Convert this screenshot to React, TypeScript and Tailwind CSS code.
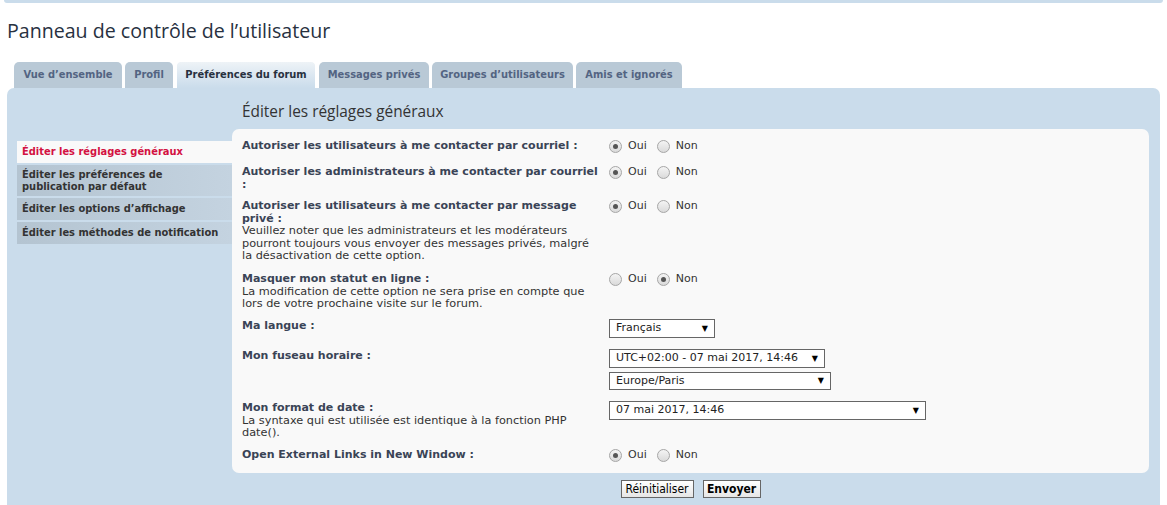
import React from "react";

const tabs = [
  { label: "Vue d’ensemble", w: "w-[108px]" },
  { label: "Profil", w: "w-[48px]" },
  { label: "Préférences du forum", w: "w-[140px]", active: true },
  { label: "Messages privés", w: "w-[110px]" },
  { label: "Groupes d’utilisateurs", w: "w-[141px]" },
  { label: "Amis et ignorés", w: "w-[106px]" },
];

function Radio({ checked }: { checked?: boolean }) {
  return (
    <span className="w-[13px] h-[13px] rounded-full border border-[#a6a6a6] bg-gradient-to-b from-[#f4f4f4] to-[#dadada] flex items-center justify-center shrink-0">
      {checked && <span className="w-[5px] h-[5px] rounded-full bg-[#555]" />}
    </span>
  );
}

function YesNo({ yes }: { yes: boolean }) {
  return (
    <div className="flex items-center h-[13px] text-[11px] text-[#333]">
      <Radio checked={yes} />
      <span className="ml-[6px]">Oui</span>
      <span className="ml-[10px]">
        <Radio checked={!yes} />
      </span>
      <span className="ml-[6px]">Non</span>
    </div>
  );
}

function Select({ value, w, h = "h-[19px]" }: { value: string; w: string; h?: string }) {
  return (
    <div className={`${w} ${h} border border-[#666] bg-white flex items-center justify-between pl-[6px] pr-[6px] text-[11px] text-[#222]`}>
      <span>{value}</span>
      <span className="text-[8px] leading-none text-black">▼</span>
    </div>
  );
}

function Row({ h, label, note, children }: { h: string; label: string; note?: string; children: React.ReactNode }) {
  return (
    <div className={`flex ${h}`}>
      <div className="w-[360px] shrink-0 text-[11px] leading-[12.5px]">
        <div className="font-bold text-[#3a4456]">{label}</div>
        {note && <div className="text-[11.3px] text-[#333]">{note}</div>}
      </div>
      <div className="ml-[7px]">{children}</div>
    </div>
  );
}

export default function App() {
  return (
    <div className="w-[1167px] h-[505px] overflow-hidden bg-white font-['DejaVu_Sans_Condensed',sans-serif]">
      <div className="mx-[4px] h-[3px] bg-[#cadceb] rounded-b-[3px]" />

      <h2 className="mt-[16px] ml-[7px] h-[24px] leading-[24px] text-[19.6px] text-[#28313f] font-['Open_Sans',sans-serif]">
        Panneau de contrôle de l’utilisateur
      </h2>

      <div className="mt-[18px] ml-[14px] flex items-end gap-[3px] h-[27px]">
        {tabs.map((t) =>
          t.active ? (
            <div
              key={t.label}
              className={`${t.w} h-[27px] rounded-t-[5px] border border-b-0 border-white bg-gradient-to-b from-[#eef3f7] to-[#cadceb] flex items-center justify-center pt-[1px] text-[11px] font-bold text-[#28313f]`}
            >
              {t.label}
            </div>
          ) : (
            <div
              key={t.label}
              className={`${t.w} h-[26px] rounded-t-[5px] bg-[#b9c9d6] flex items-center justify-center pt-[1px] text-[11px] font-bold text-[#536482]`}
            >
              {t.label}
            </div>
          )
        )}
      </div>

      <div className="mx-[7px] h-[417px] bg-[#cadceb] rounded-t-[7px] flex pl-[10px] pr-[11px]">
        <div className="w-[215px] shrink-0 pt-[53px] flex flex-col gap-[2px] text-[11px] font-bold">
          <div className="h-[22px] bg-[#f9f9f9] pl-[5px] pt-[1px] flex items-center text-[#d31141]">Éditer les réglages généraux</div>
          <div className="h-[31px] bg-gradient-to-r from-[#b4c4d1] to-[#c4d3e0] pl-[5px] pt-[1px] flex items-center leading-[12px] text-[#333]">
            Éditer les préférences de
            <br />
            publication par défaut
          </div>
          <div className="h-[22px] bg-gradient-to-r from-[#b4c4d1] to-[#c4d3e0] pl-[5px] pt-[1px] flex items-center text-[#333]">Éditer les options d’affichage</div>
          <div className="h-[22px] bg-gradient-to-r from-[#b4c4d1] to-[#c4d3e0] pl-[5px] pt-[1px] flex items-center text-[#333]">Éditer les méthodes de notification</div>
        </div>

        <div className="flex-1 pt-[14px]">
          <h3 className="ml-[10px] h-[20px] leading-[20px] text-[15.4px] text-[#333] font-['Open_Sans',sans-serif]">
            Éditer les réglages généraux
          </h3>
          <div className="mt-[7px] h-[344px] bg-[#f9f9f9] rounded-[7px] pt-[11px] pl-[10px] font-['DejaVu_Sans',sans-serif]">
            <Row h="h-[26px]" label="Autoriser les utilisateurs à me contacter par courriel :">
              <YesNo yes />
            </Row>
            <Row h="h-[34px]" label="Autoriser les administrateurs à me contacter par courriel :">
              <YesNo yes />
            </Row>
            <Row
              h="h-[73px]"
              label="Autoriser les utilisateurs à me contacter par message privé :"
              note="Veuillez noter que les administrateurs et les modérateurs pourront toujours vous envoyer des messages privés, malgré la désactivation de cette option."
            >
              <YesNo yes />
            </Row>
            <Row
              h="h-[47px]"
              label="Masquer mon statut en ligne :"
              note="La modification de cette option ne sera prise en compte que lors de votre prochaine visite sur le forum."
            >
              <YesNo yes={false} />
            </Row>
            <Row h="h-[30px]" label="Ma langue :">
              <div className="-mt-[1px]">
                <Select value="Français" w="w-[106px]" />
              </div>
            </Row>
            <Row h="h-[52px]" label="Mon fuseau horaire :">
              <div className="-mt-[1px] flex flex-col gap-[4px]">
                <Select value="UTC+02:00 - 07 mai 2017, 14:46" w="w-[216px]" />
                <Select value="Europe/Paris" w="w-[222px]" h="h-[18px]" />
              </div>
            </Row>
            <Row
              h="h-[47px]"
              label="Mon format de date :"
              note="La syntaxe qui est utilisée est identique à la fonction PHP date()."
            >
              <div className="-mt-[1px]">
                <Select value="07 mai 2017, 14:46" w="w-[317px]" />
              </div>
            </Row>
            <Row h="h-[20px]" label="Open External Links in New Window :">
              <YesNo yes />
            </Row>
          </div>
          <div className="mt-[7px] flex justify-center gap-[9px] text-[12px] text-black">
            <button className="w-[73px] h-[18px] border border-[#666] bg-gradient-to-b from-white to-[#e6e6e6] flex items-center justify-center">
              Réinitialiser
            </button>
            <button className="w-[58px] h-[18px] border border-[#666] bg-gradient-to-b from-white to-[#e6e6e6] flex items-center justify-center font-bold">
              Envoyer
            </button>
          </div>
        </div>
      </div>
    </div>
  );
}
